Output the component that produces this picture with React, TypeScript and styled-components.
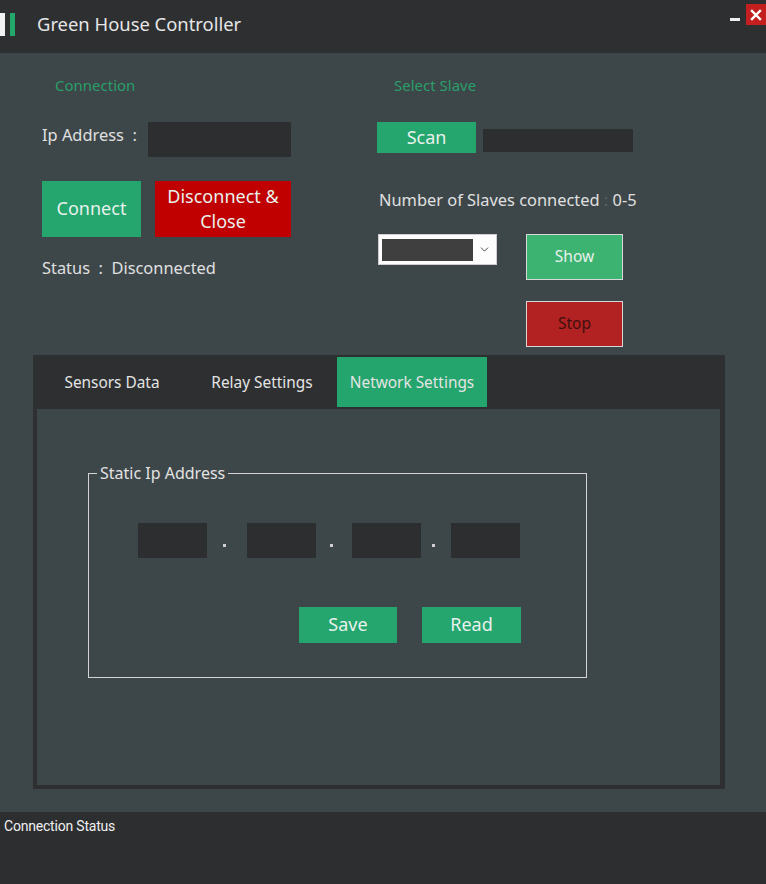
import styled, { createGlobalStyle } from "styled-components";
import { ChevronDown } from "lucide-react";

const GlobalStyle = createGlobalStyle`
  html, body {
    margin: 0;
    padding: 0;
    background: #3d4649;
    font-family: "Noto Sans", "Open Sans", sans-serif;
  }
`;

const Window = styled.div`
  width: 766px;
  height: 884px;
  display: flex;
  flex-direction: column;
  background: #3d4649;
  color: #e2e2e2;
  overflow: hidden;
`;

const TitleBar = styled.header`
  height: 53px;
  flex-shrink: 0;
  background: #2d2f31;
  display: flex;
  align-items: center;
`;

const Accent = styled.span<{ $color: string; $ml: number }>`
  width: 5px;
  height: 23px;
  margin-left: ${({ $ml }) => $ml}px;
  background: ${({ $color }) => $color};
  margin-top: -5px;
`;

const Title = styled.h1`
  margin: -6px 0 0 22px;
  font-size: 18.4px;
  font-weight: 400;
  color: #e6e6e6;
`;

const WindowControls = styled.div`
  margin-left: auto;
  align-self: flex-start;
  margin-top: 4px;
  display: flex;
  align-items: center;
  gap: 6px;
`;

const Minimize = styled.span`
  width: 10px;
  height: 3px;
  background: #f0f0f0;
  margin-top: 10px;
`;

const CloseBox = styled.span`
  width: 20px;
  height: 21px;
  background: #c41f1f;
  display: flex;
  align-items: center;
  justify-content: center;
`;

const Main = styled.main`
  flex: 1;
  display: flex;
  flex-direction: column;
`;

const Top = styled.section`
  height: 302px;
  display: grid;
  grid-template-columns: 335px 1fr;
  padding-left: 42px;
`;

const Column = styled.div`
  display: flex;
  flex-direction: column;
`;

const SectionLabel = styled.div<{ $ml: number }>`
  margin: 22px 0 0 ${({ $ml }) => $ml}px;
  height: 20px;
  line-height: 20px;
  font-size: 15px;
  color: #2a9f69;
`;

const Row = styled.div<{ $mt: number; $gap?: number; $ml?: number }>`
  display: flex;
  align-items: flex-start;
  margin-top: ${({ $mt }) => $mt}px;
  margin-left: ${({ $ml }) => $ml ?? 0}px;
  gap: ${({ $gap }) => $gap ?? 0}px;
`;

const Label = styled.span<{ $lh: number; $w?: number }>`
  font-size: 16.4px;
  line-height: ${({ $lh }) => $lh}px;
  color: #e0e0e0;
  white-space: pre;
  width: ${({ $w }) => ($w ? `${$w}px` : "auto")};
  flex-shrink: 0;
`;

const Muted = styled.span`
  color: #56666a;
`;

const DarkBox = styled.div<{ $w: number; $h: number; $mt?: number }>`
  width: ${({ $w }) => $w}px;
  height: ${({ $h }) => $h}px;
  margin-top: ${({ $mt }) => $mt ?? 0}px;
  background: #2d2e30;
  flex-shrink: 0;
`;

const Button = styled.button<{
  $w: number;
  $h: number;
  $bg: string;
  $fs?: number;
  $color?: string;
  $border?: boolean;
}>`
  width: ${({ $w }) => $w}px;
  height: ${({ $h }) => $h}px;
  background: ${({ $bg }) => $bg};
  color: ${({ $color }) => $color ?? "#e8f1ec"};
  font-family: inherit;
  font-size: ${({ $fs }) => $fs ?? 18}px;
  line-height: 1.4;
  border: ${({ $border }) => ($border ? "1px solid #d8d8d8" : "none")};
  padding: 0;
  cursor: pointer;
`;

const Select = styled.div`
  width: 119px;
  height: 31px;
  box-sizing: border-box;
  background: #fdfdfd;
  border: 1px solid #cfcfcf;
  display: flex;
  align-items: center;
  padding: 0 0 0 3px;
`;

const SelectValue = styled.div`
  width: 91px;
  height: 22px;
  background: #403f40;
`;

const SelectArrow = styled.div`
  flex: 1;
  display: flex;
  justify-content: center;
  color: #444;
`;

const TabControl = styled.section`
  margin-left: 33px;
  width: 692px;
  height: 434px;
  box-sizing: border-box;
  background: #2d2f31;
  padding: 0 5px 4px 4px;
  display: flex;
  flex-direction: column;
`;

const TabStrip = styled.nav`
  height: 54px;
  display: flex;
  align-items: flex-start;
  padding-top: 2px;
  box-sizing: border-box;
`;

const Tab = styled.div<{ $active?: boolean }>`
  width: 150px;
  height: 50px;
  display: flex;
  align-items: center;
  justify-content: center;
  font-size: 15.4px;
  color: #e4e4e4;
  background: ${({ $active }) => ($active ? "#24a56d" : "transparent")};
`;

const TabPanel = styled.div`
  flex: 1;
  background: #3d4649;
  padding: 54px 0 0 51px;
`;

const GroupBox = styled.fieldset`
  margin: 0;
  width: 499px;
  height: 215px;
  box-sizing: border-box;
  border: 1px solid #d4d4d4;
  padding: 0;
  display: flex;
  flex-direction: column;
`;

const Legend = styled.legend`
  margin-left: 8px;
  padding: 0 3px;
  font-size: 16px;
  line-height: 20px;
  color: #e2e2e2;
`;

const Dot = styled.span<{ $w: number }>`
  width: ${({ $w }) => $w}px;
  height: 35px;
  display: flex;
  align-items: center;
  justify-content: center;
  &::before {
    content: "";
    width: 3px;
    height: 3px;
    margin: 10px 5px 0 0;
    background: #cfcfcf;
  }
`;

const StatusBar = styled.footer`
  height: 72px;
  flex-shrink: 0;
  background: #2d2e30;
  padding: 6px 0 0 4px;
  box-sizing: border-box;
  font-family: Roboto, "Noto Sans", sans-serif;
  font-size: 14px;
  letter-spacing: -0.2px;
  color: #f0f0f0;
`;

export default function App() {
  return (
    <>
      <GlobalStyle />
      <Window>
        <TitleBar>
          <Accent $color="#f2f2f2" $ml={0} />
          <Accent $color="#23a86c" $ml={5} />
          <Title>Green House Controller</Title>
          <WindowControls>
            <Minimize />
            <CloseBox>
              <svg width="12" height="12" viewBox="0 0 12 12">
                <path d="M2 2L10 10M10 2L2 10" stroke="#fff" strokeWidth="2.4" strokeLinecap="square" />
              </svg>
            </CloseBox>
          </WindowControls>
        </TitleBar>
        <Main>
          <Top>
            <Column>
              <SectionLabel $ml={13}>Connection</SectionLabel>
              <Row $mt={27}>
                <Label $lh={26} $w={106}>Ip Address  :</Label>
                <DarkBox $w={143} $h={35} />
              </Row>
              <Row $mt={24} $gap={14}>
                <Button $w={99} $h={56} $bg="#24a66e">Connect</Button>
                <Button $w={136} $h={56} $bg="#c00000">
                  Disconnect &amp;
                  <br />
                  Close
                </Button>
              </Row>
              <Row $mt={19}>
                <Label $lh={24}>Status  :  Disconnected</Label>
              </Row>
            </Column>
            <Column>
              <SectionLabel $ml={17}>Select Slave</SectionLabel>
              <Row $mt={27} $gap={7}>
                <Button $w={99} $h={31} $bg="#24a66e">Scan</Button>
                <DarkBox $w={150} $h={23} $mt={7} />
              </Row>
              <Row $mt={35} $ml={2}>
                <Label $lh={24}>
                  Number of Slaves connected <Muted>:</Muted> 0-5
                </Label>
              </Row>
              <Row $mt={22} $gap={29} $ml={1}>
                <Select>
                  <SelectValue />
                  <SelectArrow>
                    <ChevronDown size={13} strokeWidth={1.8} />
                  </SelectArrow>
                </Select>
                <Button $w={97} $h={46} $bg="#3cb371" $fs={15.5} $border>
                  Show
                </Button>
              </Row>
              <Row $mt={21} $ml={149}>
                <Button $w={97} $h={46} $bg="#b22222" $fs={15.5} $color="#3f1010" $border>
                  Stop
                </Button>
              </Row>
            </Column>
          </Top>
          <TabControl>
            <TabStrip>
              <Tab>Sensors Data</Tab>
              <Tab>Relay Settings</Tab>
              <Tab $active>Network Settings</Tab>
            </TabStrip>
            <TabPanel>
              <GroupBox>
                <Legend>Static Ip Address</Legend>
                <Row $mt={40} $ml={49}>
                  <DarkBox $w={69} $h={35} />
                  <Dot $w={40} />
                  <DarkBox $w={69} $h={35} />
                  <Dot $w={36} />
                  <DarkBox $w={69} $h={35} />
                  <Dot $w={30} />
                  <DarkBox $w={69} $h={35} />
                </Row>
                <Row $mt={49} $ml={210} $gap={25}>
                  <Button $w={98} $h={36} $bg="#24a66e">Save</Button>
                  <Button $w={99} $h={36} $bg="#24a66e">Read</Button>
                </Row>
              </GroupBox>
            </TabPanel>
          </TabControl>
        </Main>
        <StatusBar>Connection Status</StatusBar>
      </Window>
    </>
  );
}
